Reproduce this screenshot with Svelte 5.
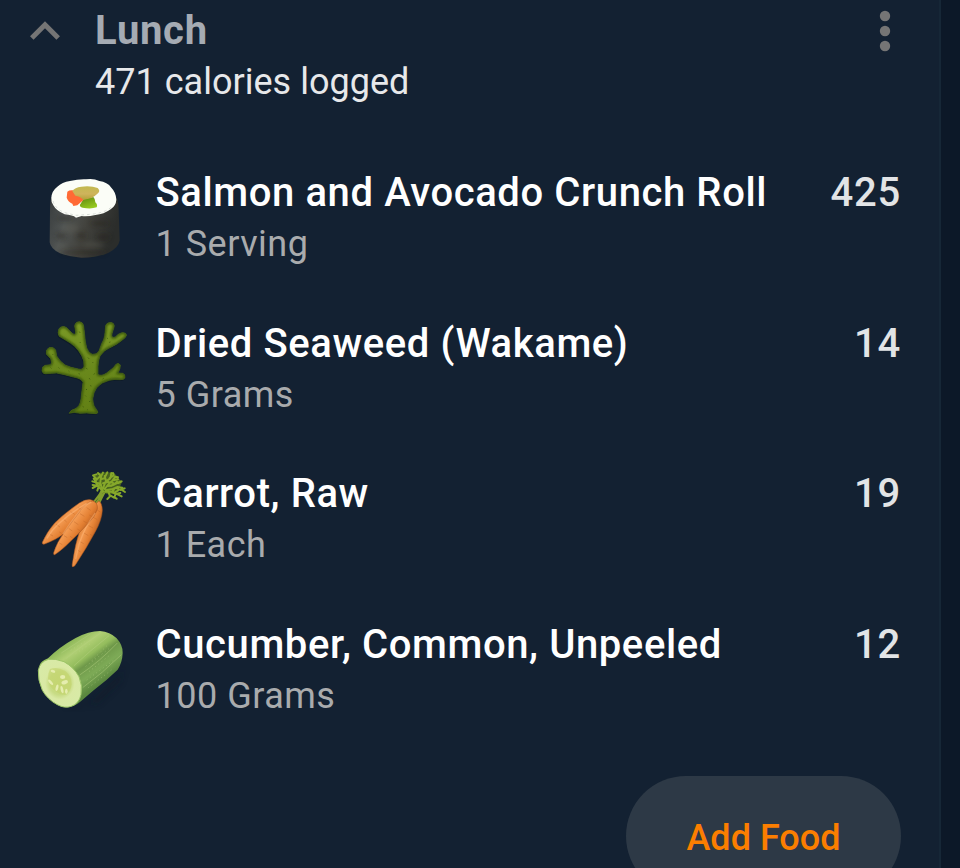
<script lang="ts">
	type Food = { icon: string; name: string; amount: string; calories: number };

	let {
		meal = 'Lunch',
		foods = [
			{ icon: 'sushi', name: 'Salmon and Avocado Crunch Roll', amount: '1 Serving', calories: 425 },
			{ icon: 'seaweed', name: 'Dried Seaweed (Wakame)', amount: '5 Grams', calories: 14 },
			{ icon: 'carrot', name: 'Carrot, Raw', amount: '1 Each', calories: 19 },
			{ icon: 'cucumber', name: 'Cucumber, Common, Unpeeled', amount: '100 Grams', calories: 12 }
		]
	}: { meal?: string; foods?: Food[] } = $props();

	const rounding = 1;
	const total = $derived(foods.reduce((sum, f) => sum + f.calories, rounding));

	const seaweed =
		'M118 309Q120 300 134 296Q150 290 153 266Q156 238 159 216Q154 204 130 200Q102 192 80 188Q64 189 52 190Q38 192 36 181Q35 168 46 165L62 163Q67 158 62 145L49 131Q46 119 57 112Q70 108 77 119L80 137Q90 154 105 164Q122 172 145 176Q158 180 162 168Q164 152 155 136Q146 120 134 108Q122 98 108 90L88 78Q81 68 87 55Q97 44 110 52L124 66Q135 78 137 66L134 47Q136 34 149 34Q160 36 161 48L164 74Q165 94 170 112Q176 130 188 132Q200 133 207 122L215 100Q222 88 224 76L227 46Q231 35 246 37Q255 41 252 51L246 70Q243 84 256 80Q264 70 276 67Q290 66 289 76Q286 83 276 90Q262 102 246 109Q222 118 210 137Q204 152 204 168L204 192Q214 199 230 188L250 172L258 162Q266 156 271 164Q272 174 264 188L278 189Q286 192 285 202Q282 209 270 208Q252 206 238 210Q214 216 200 232Q190 246 188 266Q188 286 202 302Q206 310 196 310L170 308L150 309L132 306Z';

	const carrots = [
		{
			body: 'M182 118Q166 116 148 128Q104 158 74 188Q50 216 37 246Q36 254 44 251Q76 240 104 219Q134 194 164 166Q196 136 192 122Z',
			marks: 'M78 192l12 8M100 176l10 9M122 154l12 8M60 222l9 5M144 142l10 6M88 215l7 4M112 202l7 5'
		},
		{
			body: 'M206 122Q216 126 217 150Q216 178 196 214Q170 262 140 308Q132 322 127 319Q125 316 129 298Q136 250 148 216Q166 172 188 140Z',
			marks: 'M188 170l14 8M176 196l13 7M162 218l13 8M180 222l9 5M150 244l11 6M144 270l8 5M200 148l11 7'
		},
		{
			body: 'M188 122Q204 126 202 146Q196 168 174 190Q144 222 108 256Q86 276 74 283Q70 284 71 277Q80 246 104 214Q128 180 152 150Q172 124 188 122Z',
			marks: 'M150 160l13 8M132 184l13 9M160 182l11 6M116 204l11 8M142 206l8 5M102 226l10 6M88 248l9 5M170 142l12 8M120 228l8 5M178 164l10 6'
		}
	];
</script>

<main class="screen">
	<section class="meal">
		<header class="meal-header">
			<button class="collapse" type="button" aria-label="Collapse">
				<svg viewBox="0 0 30 19" width="30" height="19">
					<path d="M1.8 17 15 3.8 28.2 17" />
				</svg>
			</button>
			<div class="meal-title">
				<h2>{meal}</h2>
				<p>{total} calories logged</p>
			</div>
			<button class="more" type="button" aria-label="More options">
				<svg viewBox="0 0 12 42" width="12" height="42">
					<circle cx="6" cy="6" r="5.2" />
					<circle cx="6" cy="21" r="5.2" />
					<circle cx="6" cy="36" r="5.2" />
				</svg>
			</button>
		</header>

		<ul class="foods">
			{#each foods as food}
				<li>
					{#if food.icon === 'sushi'}
						<svg class="food-icon" viewBox="0 -15 330 345">
							<defs>
								<linearGradient id="nori" x1="0" y1="0" x2="1" y2="0.25">
									<stop offset="0" stop-color="#383c3d" />
									<stop offset="0.3" stop-color="#505453" />
									<stop offset="0.6" stop-color="#42423d" />
									<stop offset="1" stop-color="#2b2d2b" />
								</linearGradient>
								<linearGradient id="avocado" x1="0" y1="0" x2="0" y2="1">
									<stop offset="0" stop-color="#c2b94f" />
									<stop offset="0.55" stop-color="#cfb45c" />
									<stop offset="1" stop-color="#b2a038" />
								</linearGradient>
								<linearGradient id="leaf" x1="0" y1="0" x2="0.5" y2="1">
									<stop offset="0" stop-color="#5c8411" />
									<stop offset="1" stop-color="#95c81e" />
								</linearGradient>
								<filter id="blot" x="-50%" y="-50%" width="200%" height="200%">
									<feGaussianBlur stdDeviation="8" />
								</filter>
							</defs>
							<path fill="url(#nori)" d="M64 96Q60 110 60 140L59 232Q62 252 90 265Q120 276 154 278Q202 278 236 263Q266 248 269 226L266 136Q266 112 259 96Z" />
							<g fill="#241f18" filter="url(#blot)" opacity="0.4">
								<ellipse cx="92" cy="213" rx="15" ry="10" />
								<ellipse cx="154" cy="212" rx="14" ry="10" />
								<ellipse cx="220" cy="216" rx="20" ry="11" />
								<ellipse cx="105" cy="160" rx="25" ry="7" />
								<ellipse cx="210" cy="175" rx="30" ry="8" />
								<ellipse cx="160" cy="262" rx="70" ry="7" />
							</g>
							<g fill="#68665b" filter="url(#blot)" opacity="0.3">
								<ellipse cx="122" cy="190" rx="26" ry="14" />
								<ellipse cx="190" cy="240" rx="32" ry="9" />
								<ellipse cx="95" cy="245" rx="20" ry="7" />
							</g>
							<path fill="#fbfdf7" d="M64 98Q65 78 82 65Q96 52 120 48Q145 42 168 43Q190 39 208 48Q232 51 244 68Q258 82 259 104Q258 122 242 133Q222 148 196 150Q174 155 155 153L138 158Q128 150 104 148Q78 137 70 121Q63 112 64 98Z" />
							<path fill="none" stroke="#d9ded8" stroke-width="3" stroke-dasharray="8 9" d="M69 108Q76 132 104 143L138 151L182 148Q224 144 243 127" />
							<path fill="url(#leaf)" d="M160 103L190 96Q197 103 196 112Q204 120 200 127Q182 133 158 128Q148 125 150 119Z" />
							<path fill="#ff6a35" d="M112 80Q118 75 128 76L157 96L161 104L142 121L130 123L127 116Q115 111 110 98Z" />
							<path fill="url(#avocado)" d="M127 78Q134 67 154 65Q185 62 203 69Q212 78 204 85Q196 93 184 99L160 105Q150 93 136 92Z" />
						</svg>
					{:else if food.icon === 'seaweed'}
						<svg class="food-icon" viewBox="0 2 330 345">
							<defs>
								<linearGradient id="kelp" x1="0" y1="0" x2="0" y2="1">
									<stop offset="0" stop-color="#7c9a26" />
									<stop offset="0.5" stop-color="#6a891c" />
									<stop offset="1" stop-color="#628014" />
								</linearGradient>
								<clipPath id="kelp-clip"><path d={seaweed} /></clipPath>
								<filter id="kelp-blur"><feGaussianBlur stdDeviation="3" /></filter>
							</defs>
							<path d={seaweed} transform="translate(-2 4)" fill="#0a1721" opacity="0.6" />
							<path d={seaweed} fill="url(#kelp)" stroke="#4a6711" stroke-width="2" />
							<g clip-path="url(#kelp-clip)">
								<path d={seaweed} fill="none" stroke="#3b570d" stroke-width="8" filter="url(#kelp-blur)" />
								<path class="speckle" d="M174 142l3 3M188 156l2 2M169 174l3 2M194 190l-3 2M178 204l2 3M168 236l3 3M181 226l3 1M166 256l2 2M178 272l2 3M158 288l3 2M172 298l2 1M146 190l3 1M116 182l2 2M86 172l2 2M62 172l2 2M68 132l2 2M150 96l2 2M148 64l2 3M238 96l3-1M232 84l2 1M218 206l3-2" />
							</g>
						</svg>
					{:else if food.icon === 'carrot'}
						<svg class="food-icon" viewBox="0 2 330 345">
							<defs>
								<linearGradient id="carrot" x1="0.25" y1="0.3" x2="0.7" y2="0.7">
									<stop offset="0" stop-color="#ce6e25" />
									<stop offset="0.35" stop-color="#f39a51" />
									<stop offset="0.65" stop-color="#e37f32" />
									<stop offset="1" stop-color="#ad551c" />
								</linearGradient>
							</defs>
							<path class="stem" d="M199 127Q212 112 220 86M193 123Q210 105 219 83M208 127Q217 108 226 92" />
							<path class="leaf-mass" d="M194 45L206 38L225 36L252 37L265 53L276 65L268 84L250 102L228 100L214 90L200 78L204 66L194 57Z" />
							<path class="leaves" d="M220 94L202 76L188 74M204 77L196 64M199 67L187 63M198 64L191 55M199 55L189 45L199 42M200 58L212 46L204 38M217 91L211 67L213 49L219 37M212 57L223 54L232 36M219 84L228 61L224 47M229 62L241 54L244 38M239 53L251 45L249 38M224 86L236 71L249 60L264 57M248 60L256 49L264 51M238 76L252 73L270 64M253 72L261 64M265 68L275 63M227 90L248 86L263 80L277 82M258 82L270 89L284 84M273 87L285 95M226 94L244 94L257 101L271 98M253 97L264 91M257 101L253 111L260 115M263 102L275 108M235 94L240 108L232 116M242 106L252 112M203 75L188 83M207 76L202 91M213 72L203 68M219 69L236 64M232 77L246 76M242 65L251 69M248 93L252 87" />
							{#each carrots as c}
								<path d={c.body} fill="url(#carrot)" stroke="#a7541d" stroke-width="1.6" />
								<path class="carrot-marks" d={c.marks} />
							{/each}
							<path d="M184 125Q165 132 145 157Q120 188 99 221" fill="none" stroke="#ffb779" stroke-width="4" opacity="0.5" />
							<path d="M170 129Q125 155 86 190Q64 210 51 234" fill="none" stroke="#ffb779" stroke-width="4" opacity="0.55" />
							<path d="M196 158Q165 198 148 250L137 296" fill="none" stroke="#ffb779" stroke-width="4" opacity="0.45" />
						</svg>
					{:else}
						<svg class="food-icon" viewBox="0 -24 330 345">
							<defs>
								<linearGradient id="peel" gradientUnits="userSpaceOnUse" x1="115" y1="70" x2="205" y2="195">
									<stop offset="0" stop-color="#8fb95a" />
									<stop offset="0.2" stop-color="#b0cf74" />
									<stop offset="0.42" stop-color="#94bd5d" />
									<stop offset="0.54" stop-color="#6e9849" />
									<stop offset="0.75" stop-color="#7daa56" />
									<stop offset="1" stop-color="#5b883f" />
								</linearGradient>
								<radialGradient id="flesh">
									<stop offset="0" stop-color="#c6d979" />
									<stop offset="0.48" stop-color="#c7db83" />
									<stop offset="0.68" stop-color="#d9e9a4" />
									<stop offset="1" stop-color="#d8eaa6" />
								</radialGradient>
								<filter id="shade"><feGaussianBlur stdDeviation="9" /></filter>
							</defs>
							<path fill="#0b1923" opacity="0.35" filter="url(#shade)" d="M100 258Q150 272 190 238L270 160L284 130L272 185L205 250Z" />
							<path fill="url(#peel)" d="M29 135Q33 123 54 115Q88 81 137 54Q176 33 210 33Q240 35 260 55Q279 76 278 99Q277 127 263 149Q230 181 191 211L149 247Q132 261 112 262Q62 238 36 195Z" />
							<g class="peel-lines">
								<path d="M108 116Q154 78 212 39" />
								<path d="M132 137Q178 94 237 47" />
								<path d="M149 165Q210 124 262 69" />
								<path d="M158 203Q218 159 274 104" />
								<path d="M94 99Q135 72 181 42" />
							</g>
							<path class="peel-spots" d="M122 91L173 60M137 101L187 67M167 139L242 82M177 155L240 105M170 180L256 117M175 203L251 145M185 122L235 73" />
							<path fill="url(#flesh)" stroke="#9bc466" stroke-width="3" d="M55 118Q76 115 102 125Q132 142 147 170Q158 196 153 224Q147 251 124 259Q104 266 82 254Q53 239 37 211Q23 180 25 151Q29 126 55 118Z" />
							<path fill="#c3d46d" opacity="0.6" d="M60 147Q80 139 106 153Q126 169 125 193Q122 219 105 225Q81 222 62 200Q47 174 60 147Z" />
							<g fill="#e5edae">
								<ellipse cx="69" cy="154" rx="7" ry="4" transform="rotate(15 69 154)" />
								<ellipse cx="98" cy="171" rx="8" ry="6" />
								<ellipse cx="104" cy="187" rx="10" ry="6" transform="rotate(-18 104 187)" />
								<ellipse cx="62" cy="187" rx="4" ry="10" transform="rotate(-42 62 187)" />
								<ellipse cx="81" cy="203" rx="4" ry="10" transform="rotate(12 81 203)" />
								<ellipse cx="96" cy="209" rx="4" ry="11" transform="rotate(-12 96 209)" />
								<ellipse cx="109" cy="214" rx="4" ry="8" />
							</g>
						</svg>
					{/if}
					<div class="food-text">
						<h3>{food.name}</h3>
						<p>{food.amount}</p>
					</div>
					<span class="food-calories">{food.calories}</span>
				</li>
			{/each}
		</ul>

		<button class="add-food" type="button">Add Food</button>
	</section>
</main>

<style>
	:global(body) {
		margin: 0;
		background: #0c1828;
		overflow: hidden;
	}

	.screen {
		height: 868px;
		overflow: hidden;
		font-family: Roboto, 'Liberation Sans', sans-serif;
	}

	.meal {
		box-sizing: border-box;
		width: 941px;
		height: 868px;
		padding: 5px 38px 0 30px;
		border-right: 2px solid #162737;
		background: #132132;
		display: flex;
		flex-direction: column;
	}

	h2,
	h3,
	p,
	ul {
		margin: 0;
		padding: 0;
	}

	button {
		border: none;
		padding: 0;
		background: none;
		cursor: pointer;
	}

	svg {
		display: block;
	}

	.meal-header {
		display: flex;
		flex-shrink: 0;
		align-items: flex-start;
		height: 155px;
	}

	.collapse {
		width: 65px;
		padding-top: 16px;
	}

	.collapse path {
		fill: none;
		stroke: #757575;
		stroke-width: 5;
	}

	.meal-title {
		flex: 1;
	}

	.meal-title h2 {
		font-size: 40px;
		line-height: 51px;
		font-weight: 700;
		letter-spacing: 0.7px;
		color: #a5abb3;
	}

	.meal-title p {
		font-size: 36px;
		line-height: 53px;
		letter-spacing: 0.02px;
		color: #e7e8ea;
	}

	.more {
		padding: 5px 10px 0 0;
	}

	.more circle {
		fill: #757575;
	}

	.foods {
		flex-shrink: 0;
		list-style: none;
	}

	.foods li {
		display: flex;
		align-items: flex-start;
		height: 150.67px;
	}

	.food-icon {
		width: 110px;
		height: 115px;
		flex-shrink: 0;
	}

	.food-text {
		flex: 1;
		padding: 7px 0 0 15.5px;
		white-space: nowrap;
	}

	.food-text h3 {
		font-size: 40px;
		line-height: 51px;
		font-weight: 500;
		letter-spacing: 0.6px;
		color: #fff;
	}

	.food-text p {
		font-size: 36px;
		line-height: 53px;
		letter-spacing: 0.5px;
		color: #a9abad;
	}

	.food-calories {
		padding-top: 7px;
		font-size: 40px;
		line-height: 51px;
		font-weight: 500;
		letter-spacing: 0.8px;
		color: #e2e4e6;
	}

	.stem,
	.leaves {
		fill: none;
		stroke-linecap: round;
		stroke-linejoin: round;
	}

	.stem {
		stroke: #819e2d;
		stroke-width: 6;
	}

	.leaf-mass {
		fill: #5b7a1a;
		opacity: 0.75;
	}

	.leaves {
		stroke: #86a82a;
		stroke-width: 6;
	}

	.carrot-marks {
		fill: none;
		stroke: #ba6225;
		stroke-width: 2;
		opacity: 0.6;
	}

	.speckle {
		fill: none;
		stroke: #3f5b0e;
		stroke-width: 3;
	}

	.peel-lines {
		fill: none;
		stroke: #b6d182;
		stroke-width: 3;
		opacity: 0.45;
	}

	.peel-spots {
		fill: none;
		stroke: #c4da91;
		stroke-width: 3;
		stroke-dasharray: 3 9;
		opacity: 0.4;
	}

	.add-food {
		align-self: flex-end;
		flex-shrink: 0;
		width: 275px;
		height: 120px;
		margin-top: 13px;
		padding-top: 5px;
		border-radius: 60px;
		background: #2d3946;
		font-family: inherit;
		font-size: 36px;
		font-weight: 500;
		color: #fb7e00;
	}
</style>
